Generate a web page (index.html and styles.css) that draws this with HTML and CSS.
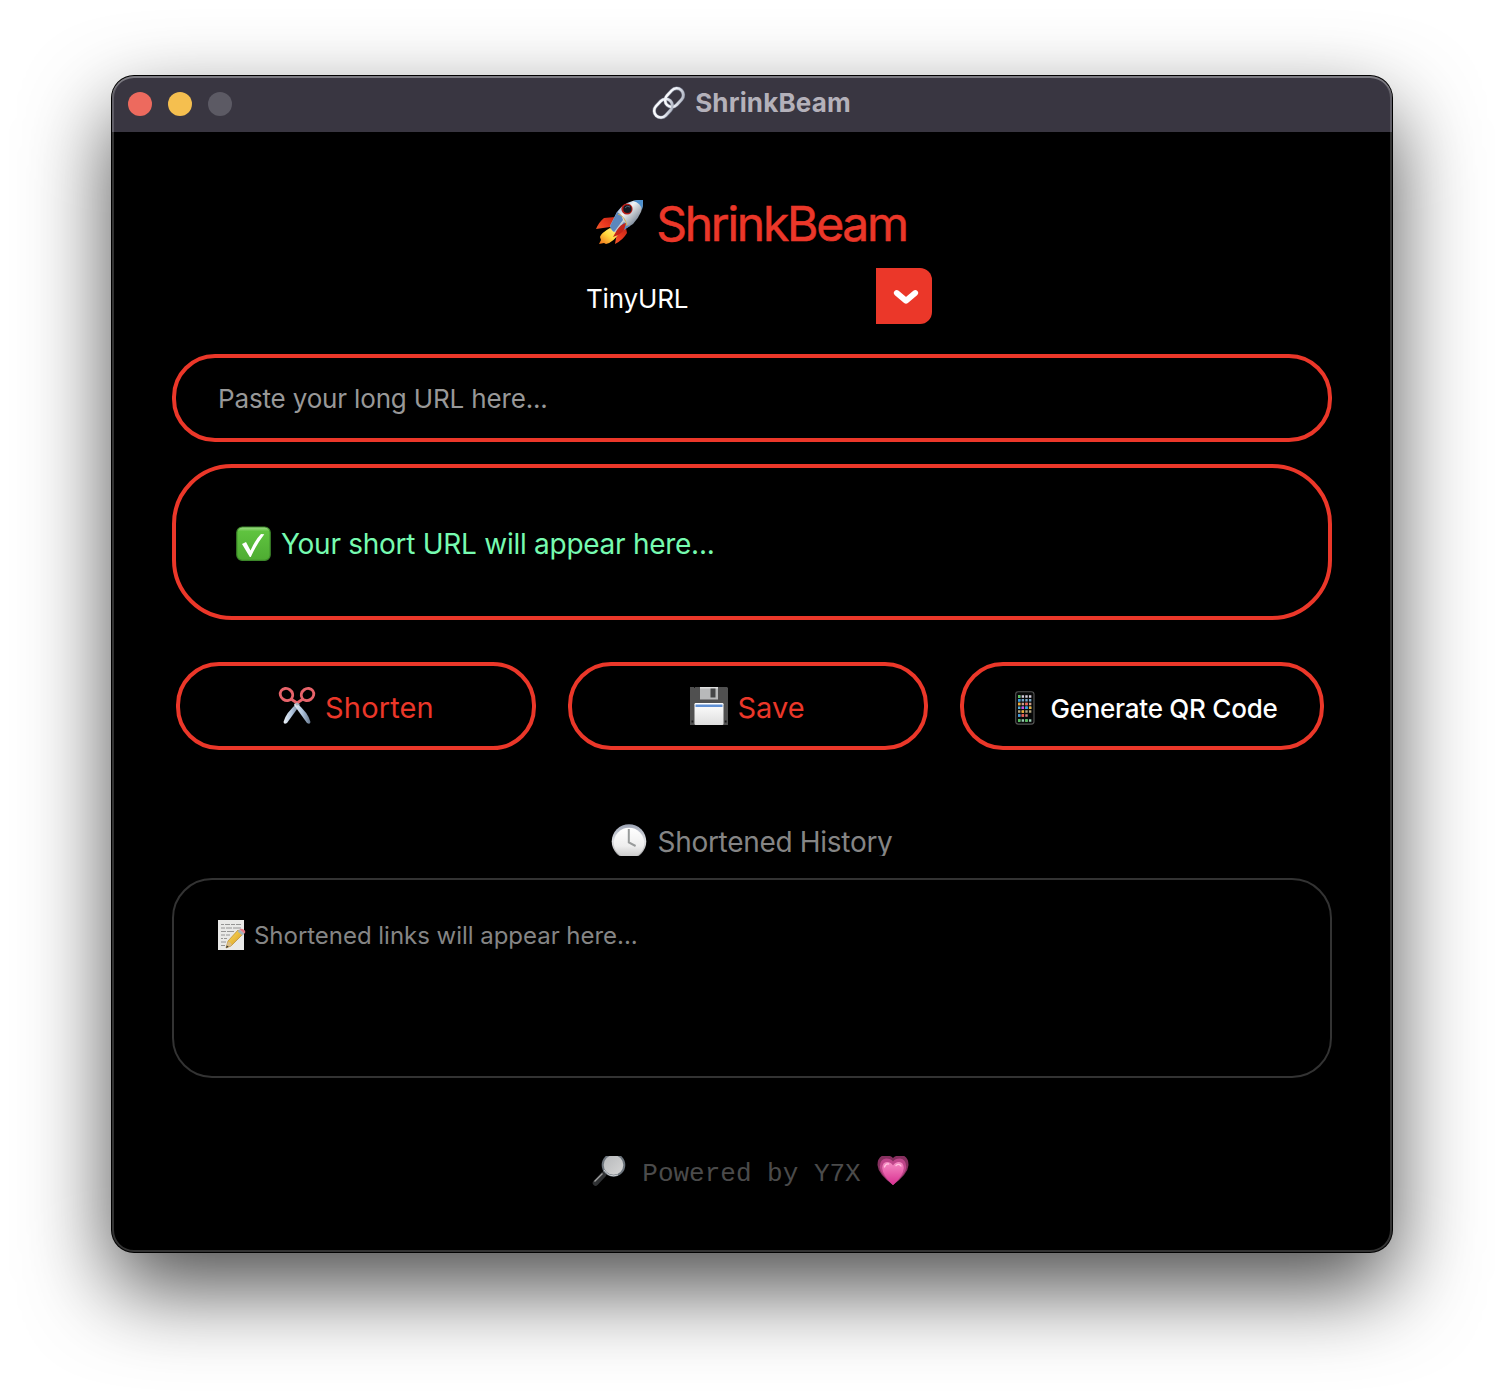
FILE: index.html
```html
<!DOCTYPE html>
<html lang="en">
<head>
<meta charset="utf-8">
<title>ShrinkBeam</title>
<link rel="stylesheet" href="styles.css">
</head>
<body>
<main class="window">
  <header class="titlebar">
    <div class="lights"><i class="light close"></i><i class="light minimize"></i><i class="light disabled"></i></div>
    <div class="title">
      <svg width="34" height="34" viewBox="0 0 34 34" fill="none">
        <defs><linearGradient id="chain" x1="0" y1="0" x2="1" y2="1"><stop offset="0" stop-color="#fff"/><stop offset=".55" stop-color="#eef1f8"/><stop offset="1" stop-color="#a3a9b8"/></linearGradient></defs>
        <g stroke="#777b8c" stroke-width="3.6"><rect x="12" y="5" width="20.5" height="13.4" rx="6.700" transform="rotate(-47 22.200 11.700)"/><rect x="1" y="15.500" width="20.500" height="13.400" rx="6.700" transform="rotate(-47 11.300 22.200)"/></g>
        <g stroke="url(#chain)" stroke-width="2.5"><rect x="12" y="5" width="20.5" height="13.4" rx="6.700" transform="rotate(-47 22.200 11.700)"/><rect x="1" y="15.500" width="20.500" height="13.400" rx="6.700" transform="rotate(-47 11.300 22.200)"/></g>
      </svg>
      <span class="title-text">ShrinkBeam</span>
    </div>
  </header>

  <div class="content">
    <h1 class="brand">
      <svg width="50" height="48" viewBox="0 0 50 48">
        <defs>
          <linearGradient id="hull" x1=".2" y1=".2" x2=".8" y2=".8"><stop offset="0" stop-color="#7ea3d3"/><stop offset=".35" stop-color="#f2f4f6"/><stop offset=".7" stop-color="#a9b1ba"/><stop offset="1" stop-color="#5b6c84"/></linearGradient>
          <linearGradient id="flame" x1="1" y1="0" x2="0" y2="1"><stop offset="0" stop-color="#fff6a0"/><stop offset=".5" stop-color="#ffd83d"/><stop offset="1" stop-color="#f06a18"/></linearGradient>
          <linearGradient id="fin" x1="1" y1="0" x2="0" y2="1"><stop offset="0" stop-color="#a9190f"/><stop offset=".5" stop-color="#ec3a20"/><stop offset="1" stop-color="#f58a38"/></linearGradient>
        </defs>
        <path d="M20 18 9 19Q4 23 1 30l14-2zM31 29l1 5q-4 7-12 11l2-12z" fill="url(#fin)"/>
        <path d="M15 29Q6 34 5 38l1 3-2 4 5-1 2 1q8-2 13-11z" fill="url(#flame)"/>
        <path d="M48 1Q31 0 22 13L15 27q2 7 9 7l14-9Q49 13 48 1z" fill="url(#hull)"/>
        <path d="M48 1q-6-.5-10 1 8 2 9 9Q48 7 48 1z" fill="#4b8fce"/>
        <path d="M22 13 15 27q1 4 4 6l9-12q-1-6-6-8zM35 27q-4-1-6-4l-8 10q1 2 3 1z" fill="#5b87bd"/>
        <path d="M23 15q7 2 9 12" fill="none" stroke="#d4af52" stroke-width="1"/>
        <path d="M31 24q-5 1-9 7l-4 7q7-2 11-7z" fill="#c52217"/>
        <circle cx="32" cy="10" r="5.6" fill="#b71d17"/><circle cx="32.4" cy="10" r="4.1" fill="#141922"/>
        <path d="M30 9q2-3 5-1" stroke="#51647c" stroke-width="1" fill="none"/>
      </svg>
      <span class="brand-text">ShrinkBeam</span>
    </h1>

    <div class="select">
      <span class="select-text">TinyURL</span>
      <div class="select-arrow"><svg width="26" height="16" viewBox="0 0 26 16"><path d="m3.800 4 9.200 7.800L22.200 4" fill="none" stroke="#fff" stroke-width="5.800" stroke-linecap="round" stroke-linejoin="round"/></svg></div>
    </div>

    <div class="url-input"><span class="url-text">Paste your long URL here...</span></div>

    <div class="result">
      <svg width="36" height="36" viewBox="0 0 36 36">
        <defs><linearGradient id="ok" x2="0" y2="1"><stop offset="0" stop-color="#a4df8c"/><stop offset=".13" stop-color="#5fc33f"/><stop offset="1" stop-color="#4eac32"/></linearGradient></defs>
        <rect x=".8" y="1" width="33.4" height="33.400" rx="5.5" fill="url(#ok)" stroke="#3c872a" stroke-width="1.2"/>
        <path d="m6 18 4-2 4.5 8.5Q19 14 25 8l3.3.2Q20 19 14.8 31h-1z" fill="#fff"/>
      </svg>
      <span class="result-text">Your short URL will appear here...</span>
    </div>

    <div class="actions">
      <div class="button shorten">
        <svg width="38" height="40" viewBox="0 0 38 40">
          <defs><linearGradient id="blade" x2="1" y2="0"><stop offset="0" stop-color="#edf2f7"/><stop offset=".5" stop-color="#afc4dd"/><stop offset="1" stop-color="#65768b"/></linearGradient></defs>
          <path d="m20.500 16 1.500 3L9 37q-3 2-3.500-1 2-9 15-20z" fill="url(#blade)"/>
          <path d="m17.500 16-1.500 3 13 18q3 2 3.500-1-2-9-15-20z" fill="url(#blade)"/>
          <g fill="none" stroke="#e8636a" stroke-width="2.8"><ellipse cx="8.500" cy="8.500" rx="6.500" ry="5.800" transform="rotate(35 8.500 8.500)"/><ellipse cx="29.500" cy="8.500" rx="6.500" ry="5.800" transform="rotate(-35 29.500 8.500)"/><path d="m13 13 6 4 6-4"/></g>
          <circle cx="19" cy="18" r="1.5" fill="#a8b3c0"/>
        </svg>
        <span class="button-text">Shorten</span>
      </div>
      <div class="button">
        <svg width="38" height="38" viewBox="0 0 38 38">
          <defs><linearGradient id="paper" x2="0" y2="1"><stop offset="0" stop-color="#fff"/><stop offset="1" stop-color="#dedede"/></linearGradient></defs>
          <path d="M0 0h37l1 1v37H0z" fill="#505050"/>
          <path d="M10 0h18v12.5H10z" fill="#b8b9ba"/><path d="M10 0h18v1.5H10z" fill="#dedede"/><path d="M20.500 1.500h5v9h-5z" fill="#454647"/>
          <rect x="4.500" y="16" width="29" height="22" rx="1.200" fill="url(#paper)"/><path d="M5.500 17.500h27v2.500h-27z" fill="#5f8fd3"/>
          <path d="M1.500 33.500h1.800v2H1.500zm33.300 0h1.800v2h-1.800zM4 0h1v1H4z" fill="#161616"/>
        </svg>
        <span class="button-text">Save</span>
      </div>
      <div class="button qr">
        <svg width="20" height="34" viewBox="0 0 20 34">
          <rect x=".7" y=".7" width="18.300" height="32.400" rx="2.600" fill="#080909" stroke="#555" stroke-width="1.100"/>
          <g fill="none" stroke-width="2.500" stroke-dasharray="2.400 1.250">
            <path d="M3 5.500h14" stroke="#d7d0de"/><path d="M3 9.200h14" stroke="#78a8c9"/><path d="M3 13h14" stroke="#c9a08d"/><path d="M3 16.800h14" stroke="#5ab1dc"/><path d="M3 20.600h14" stroke="#b3a67f"/><path d="M3 24.500h10" stroke="#d6827d"/><path d="M3 29.500h14" stroke="#9acdb5"/>
          </g>
          <path d="M3 4.300h2.400v2.400H3zm0 24h2.400v2.400H3zm7.300 0h2.400v2.400h-2.400z" fill="#51c457"/>
          <path d="M3 8h2.400v2.400H3zm0 15.300h2.400v2.400H3zm7.300-7.700h2.400v2.400h-2.400z" fill="#329fe8"/>
          <path d="M6.650 15.600h2.400v2.400h-2.400z" fill="#d34be2"/><path d="M10.300 11.800h2.400v2.400h-2.400zM6.650 23.300h2.400v2.400h-2.400z" fill="#ef5b52"/>
          <path d="M3 11.800h2.400v2.400H3zm3.650 7.600h2.400v2.400h-2.400zm7.300-3.800h2.400v2.400h-2.400z" fill="#f0ad31"/>
        </svg>
        <span class="qr-text">Generate QR Code</span>
      </div>
    </div>

    <div class="history-title">
      <svg width="36" height="36" viewBox="0 0 36 36">
        <defs><linearGradient id="clock-rim" x2="0" y2="1"><stop offset="0" stop-color="#9da4b5"/><stop offset=".5" stop-color="#e0e1e4"/><stop offset="1" stop-color="#999"/></linearGradient><linearGradient id="clock-face" x2="0" y2="1"><stop offset="0" stop-color="#fff"/><stop offset=".6" stop-color="#eee"/><stop offset="1" stop-color="#c5c5c5"/></linearGradient></defs>
        <circle cx="18" cy="17.500" r="17.300" fill="url(#clock-rim)"/><circle cx="18" cy="19" r="15.200" fill="url(#clock-face)"/>
        <path d="M17.800 5v13.500l6.800 3.500" fill="none" stroke="#989b9b" stroke-width="2"/>
      </svg>
      <span class="history-heading">Shortened History</span>
    </div>

    <section class="history">
      <svg width="28" height="30" viewBox="0 0 28 30">
        <defs><linearGradient id="pencil" x2="1" y2="1"><stop offset="0" stop-color="#ffe266"/><stop offset="1" stop-color="#d39516"/></linearGradient></defs>
        <path d="M0 0h26v30H0z" fill="#e9e9e7"/>
        <path d="M3 4.500h3m1 0h5m1 0h4m1 0h5M3 8h4m1 0h6m1 0h8M3 11.500h5m1 0h7M3 15h4m1 0h4M3 18.500h2m1 0h3M3 22h5M3 25.500h4" fill="none" stroke="#8b8b8a" stroke-width=".9"/>
        <path d="m8 28 2-7L20 10l5 4-12 12z" fill="url(#pencil)" stroke="#ad7a21" stroke-width=".6"/><path d="m8 28 2-6.500q3 .5 4 3.500z" fill="#d9bd89"/><path d="m8 28 .8-2.500 2 1.200z" fill="#333"/>
        <path d="m19.500 11.500 2-2 5 4-2 2z" fill="#a4b1ba"/><path d="m21.500 9.500q2-1.500 4 0 3 1.500 1 4z" fill="#e67882"/>
      </svg>
      <span class="history-text">Shortened links will appear here...</span>
    </section>

    <footer class="footer">
      <svg width="34" height="30" viewBox="0 0 34 30">
        <defs><linearGradient id="lens" x2="1" y2="1"><stop offset="0" stop-color="#b5b7b9"/><stop offset="1" stop-color="#d7d7d7"/></linearGradient></defs>
        <path d="m12 17 3-3" stroke="#9ca3aa" stroke-width="3"/><path d="M3.500 27 11.500 18.500" stroke="#303234" stroke-width="5.500" stroke-linecap="round"/><path d="m2.500 25.500 8-8" stroke="#a0a0a0" stroke-width="1.200"/>
        <circle cx="21.500" cy="9" r="10.800" fill="url(#lens)" stroke="#6c747c" stroke-width="2"/><path d="M12 14q5 8 14 5" fill="none" stroke="#d9dde0" stroke-width=".9"/>
      </svg>
      <span class="footer-text">Powered by Y7X</span>
      <svg width="32" height="30" viewBox="0 0 32 30">
        <defs><linearGradient id="heart" x2="0" y2="1"><stop offset="0" stop-color="#f58bc3"/><stop offset="1" stop-color="#d92f91"/></linearGradient></defs>
        <path d="M16 29Q1 18 .5 9 .5 1 7-1q6 0 9 3 3-3 9-3 6.500 2 6.500 10Q31 18 16 29z" fill="#86305f"/>
        <path d="M16 29Q3 18 2.700 11 3 3 9 2.500q5 0 7 3 2-3 7-3 6 .5 6.300 8.500Q29 18 16 29z" fill="#bf458a"/>
        <path d="M16 29Q5.500 19 5.200 12 5.500 6 10 6q4 0 6 3.500Q18 6 22 6q4.500 0 4.800 6Q26.500 19 16 29z" fill="url(#heart)"/>
        <path d="M7.500 11q1-3.500 4-3M19 9.500q3-2.500 5 .5" fill="none" stroke="#ffc3df" stroke-width="1.300" stroke-linecap="round"/>
      </svg>
    </footer>
  </div>
</main>
</body>
</html>
```
FILE: styles.css
```css
* { box-sizing: border-box; }
body {
  margin: 0;
  height: 1400px;
  padding: 76px 112px 0;
  overflow: hidden;
  background: #fff;
  font-family: Inter, "Liberation Sans", sans-serif;
}
svg { display: block; flex: none; }
span { white-space: pre; }
.window {
  position: relative;
  width: 1280px;
  height: 1176px;
  border-radius: 22px;
  background: #000;
  box-shadow: 0 0 0 1px #000, 0 36px 86px rgba(0, 0, 0, .7);
}
.window::after {
  content: "";
  position: absolute;
  inset: 0;
  border-radius: inherit;
  box-shadow: inset 0 0 0 2px rgba(255, 255, 255, .2), inset 0 2px 0 rgba(255, 255, 255, .18);
  pointer-events: none;
}
.titlebar {
  display: grid;
  grid-template-columns: 1fr auto 1fr;
  height: 56px;
  padding: 0 16px;
  align-items: center;
  border-radius: 22px 22px 0 0;
  background: #393641;
}
.lights { display: flex; gap: 16px; }
.light { width: 24px; height: 24px; border-radius: 50%; }
.close { background: #ed6a5e; }
.minimize { background: #f5bf4f; }
.disabled { background: #5c5a64; }
.title { display: flex; align-items: center; gap: 9px; height: 53px; margin-right: 1px; align-self: start; }
.title-text { font-size: 26px; font-weight: 700; letter-spacing: .16px; color: #b4b1ba; }
.content { padding: 60px 60px 0; }
.brand {
  display: flex;
  justify-content: center;
  align-items: center;
  gap: 11px;
  height: 61px;
  margin: 0;
  font-size: 48px;
  font-weight: 400;
  letter-spacing: -2.25px;
  color: #eb3729;
}
.brand-text { padding: 1px 2px 0 0; -webkit-text-stroke: .5px #eb3729; }
.select {
  display: flex;
  justify-content: space-between;
  align-items: center;
  width: 360px;
  height: 56px;
  margin: 15px auto 0;
  padding-left: 14px;
  color: #fff;
}
.select-text { padding-top: 5px; font-size: 26px; line-height: 32px; letter-spacing: -.16px; }
.select-arrow {
  display: flex;
  align-items: center;
  justify-content: center;
  width: 56px;
  height: 56px;
  padding: 1px 0 0 3px;
  border-radius: 0 12px 12px 0;
  background: #eb3729;
}
.url-input {
  display: flex;
  align-items: center;
  height: 88px;
  margin-top: 30px;
  padding: 1px 0 0 42px;
  border: 4px solid #eb3729;
  border-radius: 43px;
  color: #989898;
  font-size: 26px;
  letter-spacing: -.16px;
}
.result {
  display: flex;
  align-items: center;
  gap: 9px;
  height: 156px;
  margin-top: 22px;
  padding: 3px 0 0 60px;
  border: 4px solid #eb3729;
  border-radius: 60px;
  color: #76fbb0;
  font-size: 28px;
  letter-spacing: -.27px;
}
.actions {
  display: grid;
  grid-template-columns: 360px 360px 364px;
  gap: 32px;
  margin: 42px 0 0 4px;
}
.button {
  display: flex;
  align-items: center;
  justify-content: center;
  gap: 9px;
  height: 88px;
  padding-right: 1px;
  border: 4px solid #eb3729;
  border-radius: 43px;
  color: #eb3729;
  font-size: 29px;
}
.shorten { padding-right: 0; letter-spacing: .15px; }
.button-text { padding-top: 2px; }
.qr { gap: 15px; padding: 3px 0 0 9px; color: #fff; font-size: 26px; font-weight: 500; letter-spacing: -.25px; }
.qr-text { padding-top: 2px; }
.history-title {
  display: flex;
  justify-content: center;
  align-items: flex-start;
  gap: 10px;
  height: 32px;
  margin-top: 74px;
  overflow: hidden;
  color: #858585;
  font-size: 28px;
  line-height: 36px;
  letter-spacing: -.3px;
}
.history {
  display: flex;
  gap: 8px;
  height: 200px;
  margin-top: 22px;
  padding: 40px 0 0 44px;
  border: 2px solid #333;
  border-radius: 40px;
  color: #858585;
  font-size: 24px;
  line-height: 32px;
  letter-spacing: -.03px;
}
.footer {
  display: flex;
  justify-content: center;
  gap: 16px;
  height: 30px;
  margin: 78px 3px 0 0;
  color: #4b4b4b;
  font: 26px/36px "Liberation Mono", monospace;
}
```
